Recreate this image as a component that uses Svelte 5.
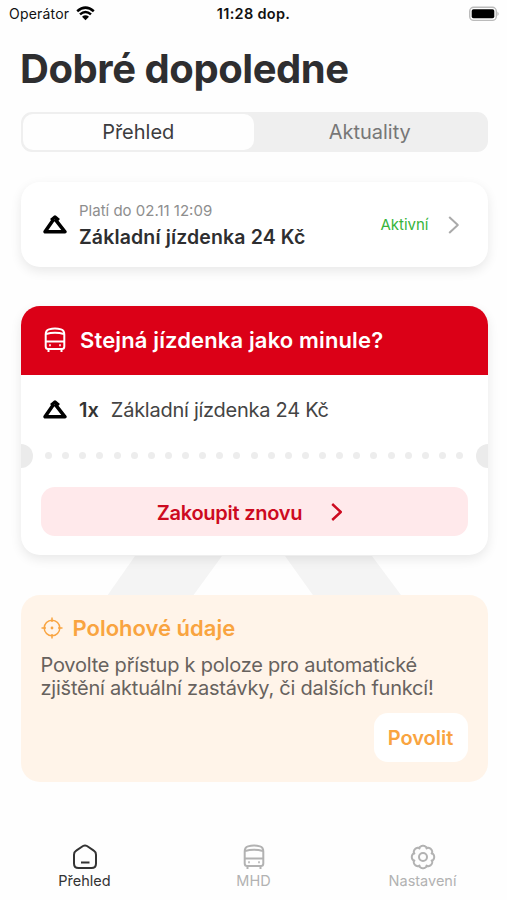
<script lang="ts">
	let segment = 'Přehled';
	let tab = 'Přehled';

	const segments = ['Přehled', 'Aktuality'];
	const tabs = ['Přehled', 'MHD', 'Nastavení'];
	const dots = Array(25);

	// outline of the settings cog, eight soft teeth
	function cog() {
		let d = '';
		for (let i = 0; i < 96; i++) {
			const a = (i / 96) * Math.PI * 2;
			const r = 9.3 + 1.9 * Math.sqrt(Math.abs(Math.cos(4 * a)));
			d += `${i ? 'L' : 'M'}${(13 + r * Math.cos(a)).toFixed(2)} ${(13 + r * Math.sin(a)).toFixed(2)}`;
		}
		return d + 'Z';
	}
</script>

{#snippet ticketIcon()}
	<svg class="ticket-icon" width="26" height="20" viewBox="0 0 26 20">
		<path d="M11.500 4.500 3 16.800H23L13 4.200" />
		<path d="M9.200 5.300 13 2 16.800 5.300" />
	</svg>
{/snippet}

{#snippet busIcon()}
	<svg class="bus-icon" width="22" height="26" viewBox="0 0 22 26">
		<path d="M1.700 7.500Q1.700 3.400 5 2.400 11 .6 17 2.400 20.300 3.400 20.300 7.500V19.500Q20.300 22 17.800 22H4.200Q1.700 22 1.700 19.500Z" />
		<path d="M2 7Q11 4.400 20 7M2 14.500H20M4.500 22V25M17.500 22V25" />
		<path d="M5.200 18.200H6.800M15.200 18.200H16.800" />
	</svg>
{/snippet}

{#snippet chevron()}
	<svg class="chevron" width="12" height="18" viewBox="0 0 12 18">
		<path d="M1.200 1 9.800 9 1.200 17" />
	</svg>
{/snippet}

<div class="screen">
	<header class="status">
		<div class="carrier">
			Operátor
			<svg width="19" height="15" viewBox="0 0 19 15">
				<path d="M1.200 5.300Q9.500-2 17.800 5.300M4 8.400Q9.500 3.600 15 8.400" />
				<path class="fill" d="M6 10.700Q9.500 7.800 13 10.700L9.500 14.300Z" />
			</svg>
		</div>
		<b>11:28 dop.</b>
		<svg class="battery" width="31" height="16" viewBox="0 0 31 16">
			<rect class="shell" x=".7" y="1.200" width="26.600" height="13.200" rx="4" />
			<rect x="2.700" y="3.300" width="22.600" height="9" rx="1.800" />
			<path class="tip" d="M28.500 5.500Q30.700 7.800 28.500 10Z" />
		</svg>
	</header>

	<h1>Dobré dopoledne</h1>

	<div class="segments">
		{#each segments as s}
			<button class:on={segment == s} on:click={() => (segment = s)}>{s}</button>
		{/each}
	</div>

	<section class="card active-ticket">
		{@render ticketIcon()}
		<div class="info">
			<small>Platí do 02.11 12:09</small>
			<strong>Základní jízdenka 24 Kč</strong>
		</div>
		<span class="state">Aktivní</span>
		{@render chevron()}
	</section>

	<div class="again-wrap">
		<svg class="watermark" width="300" height="70" viewBox="0 0 300 70">
			<path d="M46 0H133L82 70H-3ZM196 0H283L335 70H246Z" />
		</svg>
		<section class="card again">
			<h2>{@render busIcon()}Stejná jízdenka jako minule?</h2>
			<div class="item">
				{@render ticketIcon()}
				<b>1x</b>
				<span>Základní jízdenka 24 Kč</span>
			</div>
			<div class="tear">
				<i class="notch"></i>
				<div class="dots">
					{#each dots as _}<i></i>{/each}
				</div>
				<i class="notch right"></i>
			</div>
			<button class="buy">
				Zakoupit znovu
				{@render chevron()}
			</button>
		</section>
	</div>

	<section class="location">
		<h2>
			<svg width="22" height="22" viewBox="0 0 22 22">
				<circle cx="11" cy="11" r="7.800" />
				<path d="M11 .5V5M11 17V21.500M.5 11H5M17 11H21.500" />
				<circle class="dot" cx="11" cy="11" r="1.400" />
			</svg>
			Polohové údaje
		</h2>
		<p>Povolte přístup k poloze pro automatické<br />zjištění aktuální zastávky, či dalších funkcí!</p>
		<button>Povolit</button>
	</section>

	<nav>
		{#each tabs as t}
			<button class:on={tab == t} on:click={() => (tab = t)}>
				{#if t == 'Přehled'}
					<svg width="26" height="26" viewBox="0 0 26 26">
						<path d="M11 2Q13 .8 15 2L21.800 6.600Q24 8 24 10.700V19.500Q24 24 19.500 24H6.500Q2 24 2 19.500V10.700Q2 8 4.200 6.600ZM9 18.500H17.500" />
					</svg>
				{:else if t == 'MHD'}
					{@render busIcon()}
				{:else}
					<svg width="26" height="26" viewBox="0 0 26 26">
						<path d={cog()} />
						<circle cx="13" cy="13" r="4" />
					</svg>
				{/if}
				{t}
			</button>
		{/each}
	</nav>
</div>

<style>
	:global(body) {
		background: #fefefe;
	}
	.screen {
		width: 507px;
		height: 900px;
		box-sizing: border-box;
		display: flex;
		flex-direction: column;
		overflow: hidden;
		font-family: Inter, sans-serif;
		color: #2e2e30;
	}
	svg {
		flex: none;
		fill: none;
		stroke: currentColor;
		stroke-width: 2;
		stroke-linejoin: round;
		overflow: visible;
	}
	button {
		border: none;
		padding: 0;
		background: none;
		font-family: inherit;
		color: inherit;
	}
	h1,
	h2,
	p {
		margin: 0;
		white-space: nowrap;
	}
	.status {
		display: grid;
		grid-template-columns: 1fr auto 1fr;
		align-items: center;
		height: 27px;
		padding: 0 7px 0 9px;
		font-size: 14px;
		letter-spacing: 0.2px;
		color: #111;
	}
	.status b {
		margin-right: 2px;
		font-weight: 600;
		font-size: 14.500px;
		letter-spacing: 0.3px;
	}
	.carrier {
		display: flex;
		align-items: center;
		gap: 7px;
	}
	.carrier svg {
		stroke: #000;
		stroke-width: 2.500;
	}
	.carrier .fill {
		fill: #000;
		stroke: none;
	}
	.battery {
		justify-self: end;
		fill: #000;
		stroke: none;
	}
	.battery .shell {
		fill: none;
		stroke: #bbb;
		stroke-width: 1.400;
	}
	.battery .tip {
		fill: #aaa;
	}
	h1 {
		height: 85px;
		box-sizing: border-box;
		padding: 18px 0 0 20px;
		font-size: 40px;
		line-height: 48px;
		font-weight: 700;
		letter-spacing: -0.450px;
	}
	.segments {
		display: flex;
		height: 40px;
		box-sizing: border-box;
		margin: 0 19.500px 30px 20.500px;
		padding: 2px;
		border-radius: 11px;
		background: #efefef;
	}
	.segments button {
		flex: 1;
		border-radius: 10px;
		font-size: 20px;
		color: #777;
	}
	.segments .on {
		background: #fefefe;
		color: #3c3c3e;
	}
	.card {
		margin: 0 19.500px 0 20.500px;
		border-radius: 19px;
		background: #fff;
		box-shadow: 0 4px 12px rgba(0, 0, 0, 0.09);
	}
	.ticket-icon {
		stroke: #000;
		stroke-width: 3.500;
	}
	.active-ticket {
		display: flex;
		align-items: center;
		height: 85px;
		box-sizing: border-box;
		padding: 0 28px 0 21.500px;
	}
	.info {
		flex: 1;
		display: flex;
		flex-direction: column;
		margin-left: 11px;
	}
	.info small {
		font-size: 15px;
		line-height: 24px;
		color: #8e8e8e;
	}
	.info strong {
		font-size: 19.500px;
		line-height: 28px;
		font-weight: 600;
		letter-spacing: 0.140px;
	}
	.state {
		margin-right: 19px;
		font-size: 15px;
		color: #37b53b;
	}
	.active-ticket .chevron {
		color: #aaa;
	}
	.again-wrap {
		position: relative;
		margin-top: 39px;
	}
	.watermark {
		position: absolute;
		left: 89px;
		top: 250px;
		fill: #f4f4f4;
		stroke: none;
	}
	.again {
		position: relative;
		height: 249px;
		overflow: hidden;
	}
	.again h2 {
		display: flex;
		align-items: center;
		gap: 14px;
		height: 69px;
		box-sizing: border-box;
		padding: 0 0 1px 23.500px;
		background: #db0017;
		color: #fff;
		font-size: 22px;
		font-weight: 600;
		letter-spacing: 0.140px;
	}
	.item {
		display: flex;
		align-items: center;
		height: 69px;
		padding-left: 21.500px;
		font-size: 20px;
		color: #444;
	}
	.item b {
		margin: 0 12px 0 11px;
		font-weight: 600;
		color: #333;
	}
	.item span {
		letter-spacing: -0.260px;
	}
	.tear {
		display: flex;
		align-items: center;
		justify-content: space-between;
		height: 23px;
	}
	.notch {
		width: 12px;
		height: 24px;
		border-radius: 0 12px 12px 0;
		background: #ebebeb;
	}
	.notch.right {
		border-radius: 12px 0 0 12px;
	}
	.dots {
		flex: 1;
		display: flex;
		justify-content: space-between;
		padding: 0 12.500px;
	}
	.dots i {
		width: 7px;
		height: 7px;
		border-radius: 50%;
		background: #ededed;
	}
	.buy {
		display: flex;
		align-items: center;
		justify-content: center;
		gap: 29px;
		width: 427px;
		height: 49px;
		box-sizing: border-box;
		margin: 20px 0 0 20px;
		padding: 2px 8px 0 0;
		border-radius: 14px;
		background: #ffe9eb;
		color: #cd0a20;
		font-size: 20px;
		font-weight: 600;
		letter-spacing: -0.250px;
	}
	.buy .chevron {
		margin-bottom: 2px;
		stroke-width: 2.400;
	}
	.location {
		position: relative;
		display: flex;
		flex-direction: column;
		height: 187px;
		box-sizing: border-box;
		margin: 39.500px 19.500px 0 20.500px;
		padding: 19px 20px;
		border-radius: 19px;
		background: #fff4e9;
	}
	.location h2 {
		display: flex;
		align-items: center;
		gap: 10px;
		font-size: 22px;
		line-height: 28px;
		font-weight: 600;
		color: #f9a440;
	}
	.location svg {
		stroke-width: 1.500;
	}
	.location .dot {
		fill: currentColor;
		stroke: none;
	}
	.location p {
		margin-top: 12px;
		font-size: 20px;
		line-height: 23.500px;
		letter-spacing: -0.220px;
		color: #67625e;
	}
	.location button {
		align-self: flex-end;
		width: 94px;
		height: 49px;
		margin-top: 12px;
		padding-top: 2px;
		border-radius: 14px;
		background: #fff;
		color: #f9a440;
		font-size: 20px;
		font-weight: 600;
	}
	nav {
		display: flex;
		margin-top: 62px;
	}
	nav button {
		flex: 1;
		display: flex;
		flex-direction: column;
		align-items: center;
		gap: 2px;
		font-size: 14.500px;
		line-height: 18px;
		color: #b2b2b2;
	}
	nav .on {
		color: #333;
	}
</style>
